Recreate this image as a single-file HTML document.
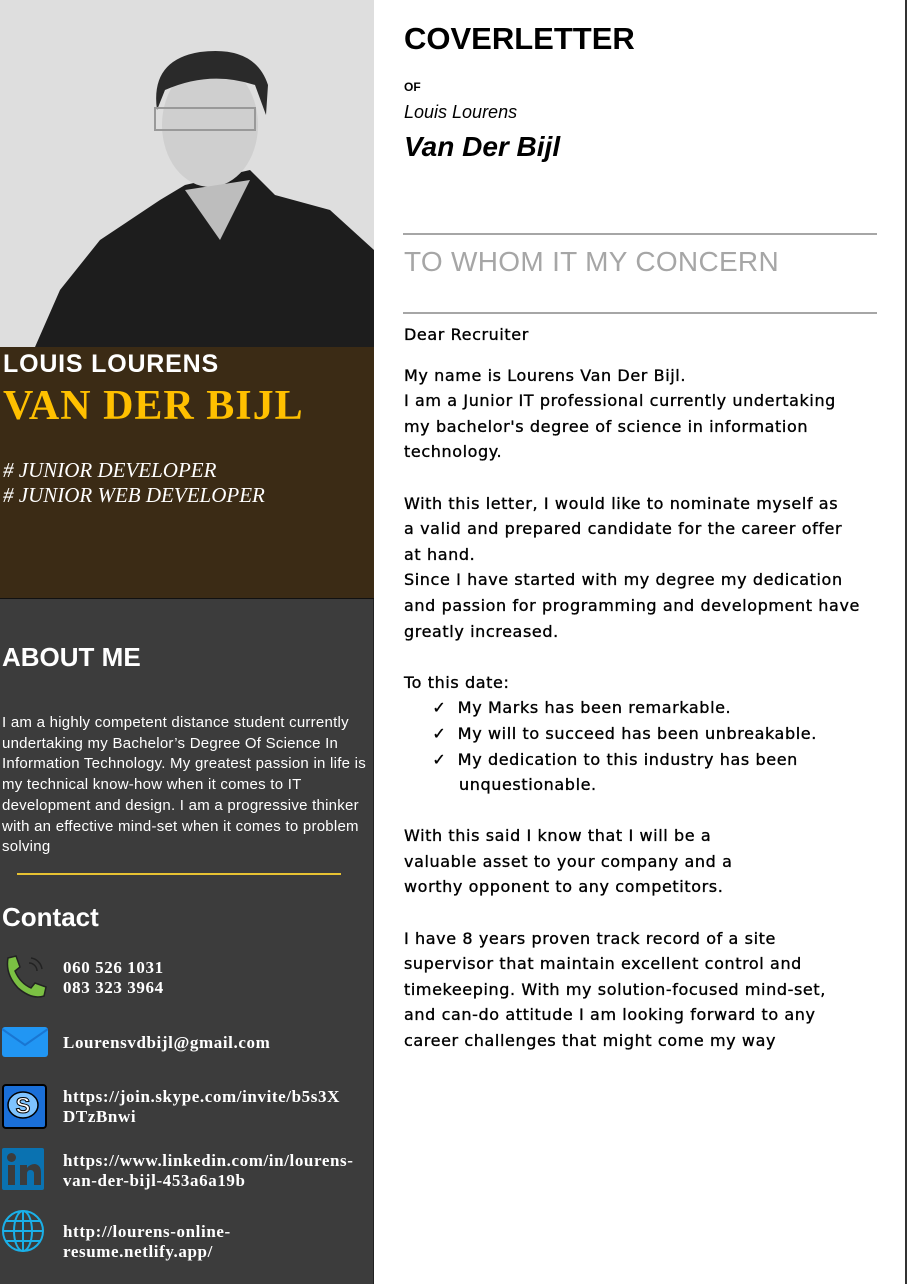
<!DOCTYPE html>
<html><head><meta charset="utf-8"><style>
*{margin:0;padding:0;box-sizing:border-box}
body{width:908px;height:1284px;background:#fff;position:relative;overflow:hidden;font-family:"Liberation Sans",sans-serif}
.side{position:absolute;left:0;top:0;width:374px;height:1284px;background:#3c3c3c;border-right:1px solid #222}
.brown{position:absolute;left:0;top:347px;width:374px;height:252px;background:#3b2b15;border-bottom:1px solid #111}
.a{position:absolute;white-space:nowrap}
.ct{color:#fff;font-family:"Liberation Serif",serif;font-weight:bold;font-size:17px;line-height:20px;letter-spacing:0.6px}
.letter{position:absolute;left:404px;top:322px;font-family:"DejaVu Sans",sans-serif;font-size:16px;line-height:25.6px;color:#000;white-space:nowrap;letter-spacing:0.6px;-webkit-text-stroke:0.35px #000}
</style></head><body>
<div class="side"></div>
<svg class="a" style="left:0;top:0" width="374" height="347" viewBox="0 0 374 347">
<rect width="374" height="347" fill="#dedede"/>
<path d="M35 347 L60 290 L100 240 L160 200 L185 185 L250 170 L275 195 L330 210 L374 250 L374 347 Z" fill="#1d1d1d"/>
<ellipse cx="210" cy="125" rx="48" ry="62" fill="#cfcfcf"/>
<path d="M157 110 Q150 60 200 52 Q255 45 268 85 L266 115 L255 85 Q210 70 165 90 Z" fill="#2a2a2a"/>
<rect x="155" y="108" width="100" height="22" fill="none" stroke="#999" stroke-width="2"/>
<path d="M185 190 L220 240 L250 180 Z" fill="#bdbdbd"/>
</svg>
<div class="brown"></div>
<div class="a" style="left:3px;top:349px;color:#fff;font-weight:bold;font-size:25px;line-height:30px;letter-spacing:0.8px">LOUIS LOURENS</div>
<div class="a" style="left:3px;top:382px;color:#ffc000;font-family:'Liberation Serif',serif;font-weight:bold;font-size:42px;line-height:48px;letter-spacing:1px">VAN DER BIJL</div>
<div class="a" style="left:3px;top:458px;color:#fff;font-family:'Liberation Serif',serif;font-style:italic;font-size:21px;line-height:25px">#&nbsp;JUNIOR DEVELOPER<br>#&nbsp;JUNIOR WEB DEVELOPER</div>
<div class="a" style="left:2px;top:640px;color:#fff;font-weight:bold;font-size:26px;line-height:34px">ABOUT ME</div>
<div class="a" style="left:2px;top:713px;color:#fff;font-size:15px;line-height:20.7px;letter-spacing:0.25px">I am a highly competent distance student currently<br>undertaking my Bachelor’s Degree Of Science In<br>Information Technology. My greatest passion in life is<br>my technical know-how when it comes to IT<br>development and design. I am a progressive thinker<br>with an effective mind-set when it comes to problem<br>solving</div>
<div class="a" style="left:17px;top:873px;width:324px;height:2px;background:#e7c232"></div>
<div class="a" style="left:2px;top:900px;color:#fff;font-weight:bold;font-size:26px;line-height:34px">Contact</div>
<svg class="a" style="left:2px;top:954px" width="46" height="46" viewBox="0 0 46 46"><path d="M6 4 L14 2 L18 13 L13 17 Q18 29 29 34 L33 29 L44 33 L42 42 Q30 46 16 34 Q3 20 6 4 Z" fill="#7bc043" stroke="#222" stroke-width="1.5"/><path d="M27 9 A8 8 0 0 1 35 17 M29 4 A13 13 0 0 1 40 15" fill="none" stroke="#222" stroke-width="1.5"/></svg>
<div class="a ct" style="left:63px;top:958px">060 526 1031<br>083 323 3964</div>
<svg class="a" style="left:2px;top:1027px" width="46" height="30"><rect width="46" height="30" rx="3" fill="#2196f3"/><path d="M0 2 L23 18 L46 2" fill="none" stroke="#1976d2" stroke-width="2"/></svg>
<div class="a ct" style="left:63px;top:1033px">Lourensvdbijl@gmail.com</div>
<svg class="a" style="left:2px;top:1084px" width="45" height="45"><rect x="1" y="1" width="43" height="43" rx="3" fill="#1a6fd8" stroke="#000" stroke-width="2"/><ellipse cx="21" cy="21" rx="15" ry="13" fill="#7ec3ff" stroke="#000" stroke-width="1.5"/><text x="21" y="29" font-family="Liberation Sans" font-weight="bold" font-size="22" text-anchor="middle" fill="#fff" stroke="#000" stroke-width="1">S</text></svg>
<div class="a ct" style="left:63px;top:1087px">https://join.skype.com/invite/b5s3X<br>DTzBnwi</div>
<svg class="a" style="left:2px;top:1148px" width="42" height="42"><rect width="42" height="42" rx="2" fill="#0a72b1"/><rect x="6" y="17" width="7" height="20" fill="#3c3c3c"/><circle cx="9.5" cy="9.5" r="4.5" fill="#3c3c3c"/><path d="M18 17 H25 V20 Q28 16 33 16 Q39 17 39 25 V37 H32 V26 Q32 22 28.5 22 Q25 22 25 26 V37 H18 Z" fill="#3c3c3c"/></svg>
<div class="a ct" style="left:63px;top:1151px">https://www.linkedin.com/in/lourens-<br>van-der-bijl-453a6a19b</div>
<svg class="a" style="left:2px;top:1210px" width="44" height="44"><g fill="none" stroke="#1ab0e8" stroke-width="2"><circle cx="21" cy="21" r="20"/><ellipse cx="21" cy="21" rx="9" ry="20"/><line x1="21" y1="1" x2="21" y2="41"/><line x1="1" y1="21" x2="41" y2="21"/><line x1="4" y1="11" x2="38" y2="11"/><line x1="4" y1="31" x2="38" y2="31"/></g></svg>
<div class="a ct" style="left:63px;top:1222px">http://lourens-online-<br>resume.netlify.app/</div>

<div class="a" style="left:905px;top:0;width:2px;height:1284px;background:#333"></div>
<div class="a" style="left:404px;top:19px;font-weight:bold;font-size:31px;line-height:40px;color:#000">COVERLETTER</div>
<div class="a" style="left:404px;top:80px;font-weight:bold;font-size:12px;color:#000">OF</div>
<div class="a" style="left:404px;top:102px;font-style:italic;font-size:18px;color:#000">Louis Lourens</div>
<div class="a" style="left:404px;top:131px;font-style:italic;font-weight:bold;font-size:28px;color:#000">Van Der Bijl</div>
<div class="a" style="left:403px;top:233px;width:474px;height:2px;background:#a6a6a6"></div>
<div class="a" style="left:404px;top:245px;font-size:28px;line-height:34px;color:#a6a6a6;letter-spacing:0.3px">TO WHOM IT MY CONCERN</div>
<div class="a" style="left:403px;top:312px;width:474px;height:2px;background:#a6a6a6"></div>
<div class="letter">Dear Recruiter<br><div style="height:15px"></div>My name is Lourens Van Der Bijl.<br>I am a Junior IT professional currently undertaking<br>my bachelor's degree of science in information<br>technology.<br><br>With this letter, I would like to nominate myself as<br>a valid and prepared candidate for the career offer<br>at hand.<br>Since I have started with my degree my dedication<br>and passion for programming and development have<br>greatly increased.<br><br>To this date:<br>&nbsp;&nbsp;&nbsp;&nbsp;&nbsp;✓&nbsp;&nbsp;My Marks has been remarkable.<br>&nbsp;&nbsp;&nbsp;&nbsp;&nbsp;✓&nbsp;&nbsp;My will to succeed has been unbreakable.<br>&nbsp;&nbsp;&nbsp;&nbsp;&nbsp;✓&nbsp;&nbsp;My dedication to this industry has been<br><span style="padding-left:55px">unquestionable.</span><br><br>With this said I know that I will be a<br>valuable asset to your company and a<br>worthy opponent to any competitors.<br><br>I have 8 years proven track record of a site<br>supervisor that maintain excellent control and<br>timekeeping. With my solution-focused mind-set,<br>and can-do attitude I am looking forward to any<br>career challenges that might come my way</div>
</body></html>
